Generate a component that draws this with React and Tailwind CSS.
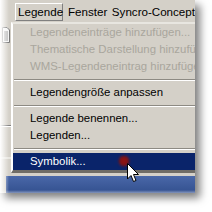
import React from 'react';

const font = { fontFamily: '"Liberation Sans", Arial, sans-serif' };

function Item({ label, disabled, active }) {
  return (
    <div
      className={`flex h-[17px] items-center whitespace-nowrap pl-[17px] text-[11.4px] ${
        active ? 'bg-[#0a246a] text-white' : disabled ? 'text-[#a9a69d]' : 'text-black'
      }`}
    >
      {label}
    </div>
  );
}

function Separator() {
  return (
    <div className="flex h-[9px] flex-col justify-center px-[1px]">
      <div className="h-px bg-[#8d8a83]" />
      <div className="h-px bg-white" />
    </div>
  );
}

function Cursor() {
  return (
    <div className="pointer-events-none absolute left-[119px] top-[156px]">
      <div className="absolute left-[1px] top-[1px] h-[8px] w-[8px] rotate-45 bg-[#6e1012] blur-[1.5px]" />
      <div className="absolute left-[1px] top-[1px] h-[8px] w-[8px] bg-[#8a1414] blur-[1.5px]" />
      <svg className="absolute left-[8px] top-[7px]" width="13" height="21" viewBox="0 0 13 21">
        <path d="M0.5 0.5 L0.5 16 L4 12.5 L6.5 18.5 L9 17.5 L6.5 11.5 L11.5 11.5 Z" fill="#fff" stroke="#000" strokeWidth="1" strokeLinejoin="miter" />
      </svg>
    </div>
  );
}

export default function App() {
  return (
    <div className="relative h-[212px] w-[212px] overflow-hidden bg-white" style={font}>
      <div className="relative flex h-[193px] w-[195px] flex-col overflow-hidden bg-[#d4d0c8] shadow-[5px_5px_8px_rgba(0,0,0,0.5)]">
        {/* menu bar */}
        <div className="flex h-[22px] items-start pt-[3px] text-[11.6px] text-black">
          <div className="ml-[15px] flex h-[18px] w-[48px] items-center border border-b-[#808080] border-l-white border-r-[#808080] border-t-white pl-[2px]">
            Legende
          </div>
          <div className="ml-[5px] flex h-[18px] w-[50px] items-center">Fenster</div>
          <div className="flex h-[18px] items-center whitespace-nowrap">Syncro-Concept</div>
        </div>

        <div className="flex">
          {/* toolbar strip left */}
          <div className="flex w-[11px] shrink-0 flex-col">
            <svg className="ml-[2px] mt-[5px]" width="8" height="16" viewBox="0 0 8 16">
              <path d="M0.5 0.5 H5 L7.5 3 V15.5 H0.5 Z" fill="#f4f4f4" stroke="#777" />
              <path d="M2 5 H6 M2 7 H6 M2 9 H6 M2 11 H6 M2 13 H6" stroke="#888" />
            </svg>
            <div className="mt-[82px] h-px bg-[#808080]" />
            <div className="h-px bg-white" />
            <div className="mt-[30px] h-[2px] bg-[#e8e6e0]" />
          </div>

          {/* dropdown */}
          <div className="flex w-[200px] shrink-0 flex-col border-b-[3px] border-l-2 border-t-2 border-b-[#6f6c66] border-l-white border-t-[#e8e6e0]">
            <Item label="Legendeneinträge hinzufügen..." disabled />
            <Item label="Thematische Darstellung hinzufügen..." disabled />
            <Item label="WMS-Legendeneintrag hinzufügen..." disabled />
            <Separator />
            <Item label="Legendengröße anpassen" />
            <Separator />
            <Item label="Legende benennen..." />
            <Item label="Legenden..." />
            <Separator />
            <Item label="Symbolik..." active />
          </div>
        </div>

        {/* blue window area below */}
        <div className="mt-[3px] flex flex-1 pl-[6px]">
          <div className="flex-1 bg-gradient-to-b from-[#4a68a8] to-[#33508f]" />
        </div>

        {/* left fade */}
        <div className="pointer-events-none absolute inset-y-0 left-0 w-[9px] bg-gradient-to-r from-white to-transparent" />
        <div className="pointer-events-none absolute inset-x-0 bottom-0 h-[3px] bg-gradient-to-t from-white/40 to-transparent" />
        <Cursor />
      </div>
    </div>
  );
}
